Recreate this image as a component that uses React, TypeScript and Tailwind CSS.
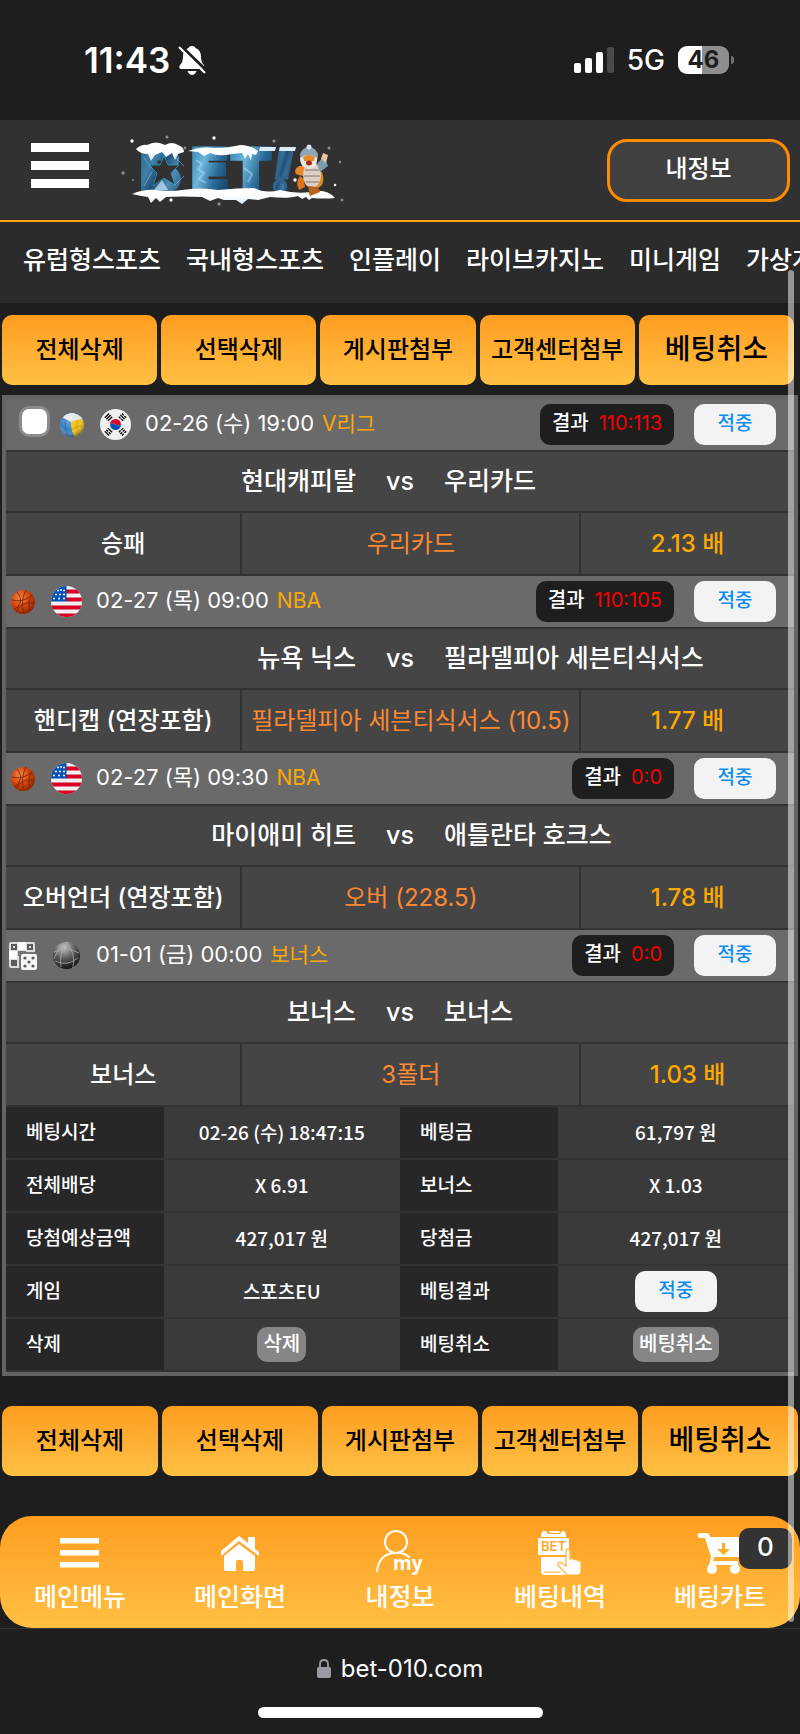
import React from 'react';

const FONT = "font-[Inter,'Noto_Sans_CJK_KR',sans-serif]";
const FONT_KR = "font-['Noto_Sans_CJK_KR',sans-serif]";

type Bet = {
  sport: 'volleyball' | 'basketball' | 'dice';
  flag: 'kr' | 'us' | 'globe';
  date: string;
  league: string;
  score: string;
  home: string;
  away: string;
  type: string;
  pick: string;
  odds: string;
  selectable?: boolean;
};

const menu = ['유럽형스포츠', '국내형스포츠', '인플레이', '라이브카지노', '미니게임', '가상게임'];

const actions = ['전체삭제', '선택삭제', '게시판첨부', '고객센터첨부', '베팅취소'];

const bets: Bet[] = [
  {
    sport: 'volleyball', flag: 'kr', date: '02-26 (수) 19:00', league: 'V리그', score: '110:113',
    home: '현대캐피탈', away: '우리카드', type: '승패', pick: '우리카드', odds: '2.13 배', selectable: true,
  },
  {
    sport: 'basketball', flag: 'us', date: '02-27 (목) 09:00', league: 'NBA', score: '110:105',
    home: '뉴욕 닉스', away: '필라델피아 세븐티식서스', type: '핸디캡 (연장포함)',
    pick: '필라델피아 세븐티식서스 (10.5)', odds: '1.77 배',
  },
  {
    sport: 'basketball', flag: 'us', date: '02-27 (목) 09:30', league: 'NBA', score: '0:0',
    home: '마이애미 히트', away: '애틀란타 호크스', type: '오버언더 (연장포함)', pick: '오버 (228.5)', odds: '1.78 배',
  },
  {
    sport: 'dice', flag: 'globe', date: '01-01 (금) 00:00', league: '보너스', score: '0:0',
    home: '보너스', away: '보너스', type: '보너스', pick: '3폴더', odds: '1.03 배',
  },
];

function WinBadge() {
  return (
    <span className={`flex h-[41px] w-[82px] items-center justify-center rounded-[10px] bg-[#f3f3f3] pb-1 text-[19px] font-medium text-[#0a8cf0] ${FONT_KR}`}>
      적중
    </span>
  );
}

/* ---------- Ícones de esporte e bandeiras ---------- */

function SportIcon({ sport }: { sport: Bet['sport'] }) {
  if (sport === 'volleyball') {
    return (
      <svg width="26" height="26" viewBox="0 0 26 26" aria-hidden="true">
        <defs>
          <radialGradient id="vb" cx="40%" cy="30%" r="75%">
            <stop offset="0" stopColor="#fff" stopOpacity=".3" />
            <stop offset=".55" stopColor="#fff" stopOpacity="0" />
            <stop offset="1" stopColor="#000" stopOpacity=".55" />
          </radialGradient>
          <clipPath id="vbc"><circle cx="13" cy="13" r="12" /></clipPath>
        </defs>
        <g clipPath="url(#vbc)">
          <rect width="26" height="26" fill="#3d8fd0" />
          <path d="M5 3 L13 0 L24 5 L24 7 L12 10 L4 6Z" fill="#e4e6e8" />
          <path d="M12 10 Q19 6 26 8 V18 L16 26 Q11 18 12 10Z" fill="#f2be10" />
          <path d="M12 10 Q11 18 16 26 H6 L0 8 L4 6Z" fill="#3583c4" />
          <path d="M12 18 Q18 13 26 14 M18 8 Q17 16 20 24" stroke="#c99c0c" strokeWidth=".8" fill="none" />
          <path d="M6 7 Q5 16 9 24" stroke="#2a6296" strokeWidth="1" fill="none" />
        </g>
        <circle cx="13" cy="13" r="12" fill="url(#vb)" />
      </svg>
    );
  }
  if (sport === 'basketball') {
    return (
      <svg width="26" height="26" viewBox="0 0 26 26" aria-hidden="true">
        <defs>
          <radialGradient id="bb" cx="38%" cy="34%" r="70%">
            <stop offset="0" stopColor="#ef8a4c" />
            <stop offset=".5" stopColor="#d94a10" />
            <stop offset="1" stopColor="#8c2400" />
          </radialGradient>
        </defs>
        <circle cx="13" cy="13" r="12" fill="url(#bb)" />
        <g fill="none" stroke="#7d2506" strokeWidth=".9">
          <path d="M2 11 Q13 14 22 6" />
          <path d="M16 1 Q10 12 14 25" />
          <path d="M6 23 Q11 12 24 14" />
          <path d="M7 3 Q12 9 10 14 Q9 19 4 20" />
          <path d="M22 6 Q17 12 20 22" />
        </g>
      </svg>
    );
  }
  return (
    <svg width="28" height="28" viewBox="0 0 28 28" aria-hidden="true">
      <rect x="0" y="0" width="26" height="26" rx="2" fill="#dcdcdc" />
      <rect x="9" y="0" width="8" height="8" fill="#fafafa" />
      <rect x="0" y="9" width="8" height="8" fill="#fafafa" />
      <rect x="9" y="9" width="8" height="5" fill="#757575" />
      <rect x="10" y="10" width="16" height="16" fill="#757575" />
      <g fill="none" stroke="#5c5c5c" strokeWidth="2">
        <rect x="3" y="3" width="4" height="4" />
        <rect x="19" y="3" width="4" height="4" />
      </g>
      <rect x="2" y="18" width="6" height="6" fill="#5c5c5c" />
      <rect x="12" y="12" width="16" height="16" rx="2" fill="#f5f5f5" />
      <g fill="#5c5c5c">
        <circle cx="16" cy="16" r="1.6" />
        <circle cx="24" cy="16" r="1.6" />
        <circle cx="20" cy="20" r="1.6" />
        <circle cx="16" cy="24" r="1.6" />
        <circle cx="24" cy="24" r="1.6" />
      </g>
    </svg>
  );
}

function Flag({ flag }: { flag: Bet['flag'] }) {
  if (flag === 'kr') {
    return (
      <svg width="31" height="31" viewBox="0 0 31 31" aria-hidden="true">
        <circle cx="15.5" cy="15.5" r="15.5" fill="#f0f0f0" />
        <path d="M10 15.5 a5.5 5.5 0 0 1 11 0 q-2.7 2-5.5 0 t-5.5 0Z" fill="#d80027" />
        <path d="M21 15.5 a5.5 5.5 0 0 1 -11 0 q2.7 -2 5.5 0 t5.5 0Z" fill="#0052b4" />
        <g stroke="#111" strokeWidth="1.4">
          <g transform="translate(8.5 8.2) rotate(-45)"><path d="M-3 -2.2 H3 M-3 0 H3 M-3 2.2 H3" /></g>
          <g transform="translate(22.5 8.2) rotate(45)"><path d="M-3 -2.2 H-.5 M.5 -2.2 H3 M-3 0 H3 M-3 2.2 H-.5 M.5 2.2 H3" /></g>
          <g transform="translate(8.5 22.8) rotate(45)"><path d="M-3 -2.2 H3 M-3 0 H-.5 M.5 0 H3 M-3 2.2 H3" /></g>
          <g transform="translate(22.5 22.8) rotate(-45)"><path d="M-3 -2.2 H-.5 M.5 -2.2 H3 M-3 0 H-.5 M.5 0 H3 M-3 2.2 H-.5 M.5 2.2 H3" /></g>
        </g>
      </svg>
    );
  }
  if (flag === 'us') {
    return (
      <svg width="31" height="31" viewBox="0 0 31 31" aria-hidden="true">
        <defs><clipPath id="usc"><circle cx="15.5" cy="15.5" r="15.5" /></clipPath></defs>
        <g clipPath="url(#usc)">
          <rect width="31" height="31" fill="#f0f0f0" />
          <path d="M15 5.5 H31 M15 13.5 H31 M0 21.5 H31 M0 29.5 H31" stroke="#d80027" strokeWidth="4" />
          <rect width="15.5" height="15.5" fill="#0052b4" />
          <g fill="#f0f0f0">
            <circle cx="7" cy="4.5" r="1" /><circle cx="10" cy="4" r="1" /><circle cx="13" cy="4.5" r="1" />
            <circle cx="5" cy="8.5" r="1.1" /><circle cx="9" cy="8.5" r="1.1" /><circle cx="13" cy="8.5" r="1.1" />
            <circle cx="3" cy="12.5" r="1.1" /><circle cx="8" cy="12.5" r="1.1" /><circle cx="13" cy="12.5" r="1.1" />
          </g>
        </g>
      </svg>
    );
  }
  return (
    <svg width="31" height="31" viewBox="0 0 31 31" aria-hidden="true">
      <defs>
        <radialGradient id="gl" cx="40%" cy="20%" r="85%">
          <stop offset="0" stopColor="#c5c5c5" />
          <stop offset=".5" stopColor="#5a5a5a" />
          <stop offset="1" stopColor="#080808" />
        </radialGradient>
      </defs>
      <circle cx="15.5" cy="15.5" r="13.5" fill="url(#gl)" />
      <g fill="none" stroke="#a9a9a9" strokeWidth=".8">
        <path d="M3 19 Q8 5 18 2" />
        <path d="M3 12 Q15 6 28 13" />
        <path d="M15 2 Q25 12 22 28" />
        <path d="M15 2 Q8 14 10 27" />
        <path d="M4 21 Q16 27 27 18" />
      </g>
    </svg>
  );
}

/* ---------- Logo ---------- */

function Logo() {
  return (
    <svg width="226" height="72" viewBox="0 0 226 72" role="img" aria-label="BET!">
      <defs>
        <linearGradient id="ice" x1="0" y1="0" x2="1" y2="1">
          <stop offset="0" stopColor="#2d678f" />
          <stop offset=".35" stopColor="#3f7fa9" />
          <stop offset=".5" stopColor="#234f78" />
          <stop offset=".7" stopColor="#4d8db8" />
          <stop offset="1" stopColor="#1b456d" />
        </linearGradient>
        <linearGradient id="ice2" x1="0" y1="0" x2="1" y2=".6">
          <stop offset="0" stopColor="#2a7ca4" />
          <stop offset=".4" stopColor="#6db7dc" />
          <stop offset=".75" stopColor="#2a6b98" />
          <stop offset="1" stopColor="#1a4a76" />
        </linearGradient>
        <linearGradient id="snow" x1="0" y1="0" x2="0" y2="1">
          <stop offset="0" stopColor="#fff" />
          <stop offset=".6" stopColor="#fafdff" />
          <stop offset="1" stopColor="#cfe5f5" />
        </linearGradient>
      </defs>
      <g className="font-[Inter,sans-serif] font-black" fontSize="58" strokeWidth="5">
        <text x="21" y="57" fill="url(#ice)" stroke="url(#ice)">B</text>
        <text x="72" y="57" fill="url(#ice2)" stroke="url(#ice2)">E</text>
        <text x="111" y="57" fill="url(#ice2)" stroke="url(#ice2)">T</text>
        <text x="151" y="57" fill="url(#ice)" stroke="#2f648e" strokeWidth="3" fontStyle="italic">!</text>
      </g>
      <path d="M44 22 l4 9 11 0 -8 8 4 12 -11-7 -11 8 4-13 -8-8 11 0Z" fill="#313131" stroke="#22a0b5" strokeWidth=".8" />
      <path d="M34 56 l8-10 6 10Z" fill="#b9d8ee" opacity=".8" />
      <path d="M24 52 l8-14 M56 24 l8 8 M54 52 l10-10 M24 24 l8 10" stroke="#8fb8d8" strokeWidth="1" opacity=".6" />
      <path d="M76 26 l6 4 -4 5 6 4 -5 6 7 4 M124 34 l8 6 -4 8" stroke="#b9e0f5" strokeWidth="2" fill="none" opacity=".5" />
      {/* neve no topo */}
      <path
        d="M16 15 Q22 10 27 11 Q36 6 45 11 Q52 7 58 11 Q64 13 64 18 L58 20 L55 26 L52 19 L46 23 L42 18 L35 21 L31 27 L28 20 Q20 20 16 15Z"
        fill="url(#snow)"
      />
      <path
        d="M68 17 Q80 12 92 14 Q110 14 120 11 Q130 11 138 17 L136 21 L132 20 L131 27 L128 20 L125 25 L122 19 L112 20 Q98 23 90 19 L84 22 L78 18Z"
        fill="url(#snow)"
      />
      <path d="M140 13 H156 L155 17 H139Z M160 13 H176 L175 17 H159Z" fill="#dcecf7" />
      {/* neve na base */}
      <path
        d="M12 60 Q24 55 36 56 Q50 58 62 56 Q80 53 98 56 Q118 54 134 54 Q146 60 160 56 Q176 60 190 58 Q206 54 215 64 Q204 65 192 64 L189 66 L186 63 L182 65 L178 62 Q168 65 150 63 L138 66 L128 65 L122 70 L116 66 L104 66 L98 64 L90 67 L82 63 Q60 62 46 63 L40 68 L36 64 L31 69 L28 63 Q20 62 12 60Z"
        fill="url(#snow)"
      />
      {/* mascote */}
      <path d="M198 54 Q206 50 202 38 L196 36 L194 52Z" fill="#e08a1c" />
      <path d="M179 32 q-6 4-3 8 q8 4 14-1 l-2-7Z" fill="#e8862a" />
      <path d="M180 42 q-5 6-1 14 l6-3 -1-8Z" fill="#dd7418" />
      <ellipse cx="192" cy="41" rx="9" ry="13" fill="#d9cfc6" />
      <path d="M185 36 h14 M184 42 h16 M186 48 h13" stroke="#8a7568" strokeWidth="1" />
      <path d="M188 52 q12 0 12 6 l-10 4 q-2-3-1-5Z" fill="#b8631c" />
      <path d="M197 30 L204 22 L208 32 L200 38Z" fill="#7e9bab" />
      <path d="M201 25 l2-6 5 2 -2 8Z" fill="#e9c3a0" />
      <circle cx="189" cy="22" r="9" fill="#8fa6b5" />
      <path d="M180 24 q0 10 9 11 q9-1 8-11 q-8-6-17 0Z" fill="#eee7df" />
      <path d="M183 23 q6-4 12 0 l-1 4 h-10Z" fill="#e58a2c" />
      <ellipse cx="189" cy="29" rx="3" ry="2.5" fill="#a62a1c" />
      <circle cx="189" cy="13" r="2.5" fill="#d5e2ea" />
      {/* flocos */}
      <g fill="#fff">
        <circle cx="12" cy="7" r="1.7" /><circle cx="94" cy="4" r="1.7" /><circle cx="51" cy="66" r="1.7" />
        <circle cx="175" cy="46" r="1.7" /><circle cx="215" cy="51" r="1.3" /><circle cx="138" cy="64" r="1.5" />
      </g>
      <g fill="#8d8d8d">
        <circle cx="47" cy="3" r="1.5" /><circle cx="3" cy="39" r="1.7" /><circle cx="13" cy="46" r="1" />
        <circle cx="154" cy="7" r="1.6" /><circle cx="209" cy="14" r="1.5" /><circle cx="220" cy="28" r="1.2" />
        <circle cx="222" cy="66" r="1.3" /><circle cx="99" cy="70" r="1.7" /><circle cx="65" cy="14" r="1.4" />
      </g>
    </svg>
  );
}

/* ---------- Ícones da barra inferior ---------- */

function MenuIcon() {
  return (
    <svg width="40" height="46" viewBox="0 0 40 46" fill="#fff" aria-hidden="true">
      <path d="M0 8 H39 V13.500 H0Z M0 20 H39 V25.500 H0Z M0 32 H39 V37.500 H0Z" />
    </svg>
  );
}

function HomeIcon() {
  return (
    <svg width="38" height="46" viewBox="0 -6 38 46" fill="#fff" aria-hidden="true">
      <path d="M0 15 L18 0 L27 7 V1 H34 V13 L38 16 V20 L18 5 L0 20Z" />
      <path d="M3 20 L18 8 L34 20 V33 q0 2-2 2 H22 V26 q0-2-2-2 h-3 q-2 0-2 2 V35 H5 q-2 0-2-2Z" />
    </svg>
  );
}

function MyIcon() {
  return (
    <svg width="48" height="46" viewBox="0 0 48 46" aria-hidden="true">
      <g fill="none" stroke="#fff" strokeWidth="2" strokeLinecap="round">
        <circle cx="20" cy="12" r="11" />
        <path d="M1 41 Q3 25 17 23 M24 23 Q30 24 33 27" />
      </g>
      <text x="17" y="40" fontSize="19" fill="#fff" className="font-['Open_Sans',sans-serif] font-bold">my</text>
    </svg>
  );
}

function BetIcon() {
  return (
    <svg width="44" height="46" viewBox="0 0 44 46" aria-hidden="true">
      <path d="M5 1 H8 L10 4 H22 L24 1 H26 Q28 2 28 7 H3 Q3 2 5 1Z M11 1 H22 L21 3 H12Z" fill="#fff" />
      <rect x="0" y="8" width="31" height="17" rx="1" fill="#fff" />
      <text x="15.5" y="21" textAnchor="middle" fontSize="13" fill="#ffa92b" className="font-[Inter,sans-serif] font-semibold">BET</text>
      <path d="M3 27 H28 V45 H7 Q3 45 3 41Z" fill="#fff" />
      <path d="M6 42 H22" stroke="#ffb233" />
      <path
        d="M28 20 q3-2 4 1 v8 q2-2 4 1 q2-2 4 1 q3-1 3 2 v9 q0 3-3 3 H29 L20 35 q0-4 4-2 l4 3Z"
        fill="#fff"
        stroke="#ffb233"
        strokeWidth="1.2"
      />
    </svg>
  );
}

function CartIcon() {
  return (
    <svg width="46" height="46" viewBox="0 0 46 46" aria-hidden="true">
      <path d="M2 3 H10 Q12 3 13 7 H46 L42 27 H17 L16 31 H41 V35 H12 L14 27 L8 8 H2 Q-1 5 2 3Z" fill="#fff" />
      <circle cx="15" cy="39" r="5" fill="#fff" />
      <circle cx="38" cy="39" r="5" fill="#fff" />
      <path d="M25 13 h3 v6 h5 l-6.500 6 -6.500-6 h5Z" fill="#ffa92b" />
    </svg>
  );
}

const tabs = [
  { label: '메인메뉴', icon: <MenuIcon /> },
  { label: '메인화면', icon: <HomeIcon /> },
  { label: '내정보', icon: <MyIcon /> },
  { label: '베팅내역', icon: <BetIcon /> },
  { label: '베팅카트', icon: <CartIcon />, count: 0 },
];

/* ---------- Blocos da página ---------- */

function StatusBar() {
  return (
    <div className="flex h-[120px] items-center justify-between pr-[66px] pl-[84px] font-[Inter,sans-serif] text-white">
      <div className="flex items-center gap-2">
        <span className="text-[35px] font-semibold">11:43</span>
        <svg width="28" height="30" viewBox="0 0 28 30" aria-hidden="true">
          <path d="M14 1 Q17 1 17.500 3 Q23 5 23 12 Q23 17 26 20 Q27 24 24 24 H3 Q0 23 2 20 Q5 17 5 12 Q5 5 10.500 3 Q11 1 14 1Z" fill="#fff" />
          <path d="M9.500 26 H18.500 Q17 30 14 30 Q11 30 9.500 26Z" fill="#fff" />
          <path d="M2 0 L29 26" stroke="#1e1e1e" strokeWidth="3" />
          <path d="M1 2 L27 28" stroke="#fff" strokeWidth="2.200" />
        </svg>
      </div>
      <div className="flex items-center">
        <svg width="40" height="26" viewBox="0 0 40 26" fill="#fff" aria-hidden="true">
          <rect x="0" y="16" width="7" height="10" rx="2" />
          <rect x="11" y="11" width="7" height="15" rx="2" />
          <rect x="22" y="5" width="7" height="21" rx="2" />
          <rect x="33" y="0" width="7" height="26" rx="2" fill="#4a4a4a" />
        </svg>
        <span className="mx-[13px] text-[28px] font-medium">5G</span>
        <span className="flex h-7 w-[51px] items-center justify-center rounded-[9px] bg-linear-to-r from-white from-[47%] to-[#8e8e8e] to-[47%] text-[24px] font-bold text-[#1e1e1e]">
          46
        </span>
        <span className="ml-0.5 h-2 w-[3px] rounded-r-full bg-[#6e6e6e]" />
      </div>
    </div>
  );
}

function ActionButtons({ className }: { className: string }) {
  return (
    <div className={`grid grid-cols-5 gap-1 ${className}`}>
      {actions.map((label) => (
        <button
          key={label}
          type="button"
          className="h-[70px] rounded-[10px] bg-linear-to-b from-[#ff9d1e] to-[#ffc043] text-[24px] font-medium whitespace-nowrap text-black last:pb-0.5 last:text-[28px]"
        >
          {label}
        </button>
      ))}
    </div>
  );
}

function BetRow({ bet }: { bet: Bet }) {
  return (
    <article>
      <div className="flex h-[53px] items-center border-b-2 border-[#333] bg-[#6a6a6a] pr-[18px] pl-[2px]">
        {bet.selectable && (
          <input
            type="checkbox"
            aria-label="베팅 선택"
            className="mr-[7px] mb-[6px] ml-[11px] size-[31px] appearance-none rounded-[10px] border-[3px] border-[#8b8b90] bg-white"
          />
        )}
        <span className="flex w-[30px] justify-center"><SportIcon sport={bet.sport} /></span>
        <span className="ml-[13px] flex"><Flag flag={bet.flag} /></span>
        <span className="ml-3.5 pb-0.5 text-[22px] text-white">{bet.date}</span>
        <span className="ml-2 pb-0.5 text-[21px] text-[#ffa800]">{bet.league}</span>
        <span className="ml-auto flex h-[41px] items-center gap-2.5 rounded-[10px] bg-[#1e1e1e] px-3 pb-1 text-[20px] font-medium text-white">
          결과 <em className="font-normal text-[#f80000] not-italic">{bet.score}</em>
        </span>
        <span className="ml-5"><WinBadge /></span>
      </div>
      <div className="grid h-[61px] grid-cols-[1fr_88px_1fr] items-center border-b-2 border-[#333] bg-[#454545] text-[25px] font-medium text-white">
        <span className="text-right">{bet.home}</span>
        <span className="text-center">vs</span>
        <span>{bet.away}</span>
      </div>
      <div className="grid h-[63px] grid-cols-[30%_43%_27%] border-b-2 border-[#333] bg-[#454545] text-[24px] font-medium whitespace-nowrap">
        <span className="flex items-center justify-center border-r-2 border-[#333] text-white">{bet.type}</span>
        <span className="flex items-center justify-center border-r-2 border-[#333] font-normal text-[#ff8833]">{bet.pick}</span>
        <span className="flex items-center justify-center text-[#ffa800]">{bet.odds}</span>
      </div>
    </article>
  );
}

function SmallButton({ children }: { children: React.ReactNode }) {
  return (
    <button type="button" className="h-[35px] rounded-[10px] bg-[#868686] px-1.5 pb-1 align-middle text-[20px] font-medium text-white">
      {children}
    </button>
  );
}

const summary: [string, React.ReactNode, string, React.ReactNode][] = [
  ['베팅시간', '02-26 (수) 18:47:15', '베팅금', '61,797 원'],
  ['전체배당', 'X 6.91', '보너스', 'X 1.03'],
  ['당첨예상금액', '427,017 원', '당첨금', '427,017 원'],
  ['게임', '스포츠EU', '베팅결과', <span className="flex justify-center"><WinBadge /></span>],
  ['삭제', <SmallButton>삭제</SmallButton>, '베팅취소', <SmallButton>베팅취소</SmallButton>],
];

function Summary() {
  return (
    <table className={`w-full table-fixed border-separate border-spacing-0 text-[19px] font-medium text-white ${FONT_KR}`}>
      <colgroup>
        <col className="w-[20%]" />
        <col className="w-[30%]" />
        <col className="w-[20%]" />
        <col className="w-[30%]" />
      </colgroup>
      <tbody>
        {summary.map(([a, av, b, bv]) => (
          <tr key={a}>
            <th scope="row" className="h-[53px] border-b-2 border-[#333] bg-[#272727] pb-0.5 pl-5 text-left font-medium">{a}</th>
            <td className="h-[53px] border-b-2 border-[#333] bg-[#3a3a3a] text-center">{av}</td>
            <th scope="row" className="h-[53px] border-b-2 border-[#333] bg-[#272727] pb-0.5 pl-5 text-left font-medium">{b}</th>
            <td className="h-[53px] border-b-2 border-[#333] bg-[#3a3a3a] text-center">{bv}</td>
          </tr>
        ))}
      </tbody>
    </table>
  );
}

export default function App() {
  return (
    <div className={`relative min-h-screen overflow-hidden bg-[#1e1e1e] ${FONT}`}>
      <StatusBar />

      {/* Cabeçalho */}
      <header className="flex h-[102px] items-center border-b-2 border-[#ffa500] bg-[#313131] pr-[10px] pl-[31px]">
        <button type="button" aria-label="메뉴">
          <svg width="58" height="54" viewBox="0 0 58 54" fill="#fff" aria-hidden="true">
            <path d="M0 0 H58 V9 H0Z M0 18 H58 V27 H0Z M0 36 H58 V45 H0Z" />
          </svg>
        </button>
        <a href="#" className="ml-[31px]"><Logo /></a>
        <button
          type="button"
          className="ml-auto h-[63px] w-[183px] rounded-[20px] border-[3px] border-[#ff8c00] bg-[#404040] pb-0.5 text-[24px] font-medium text-white"
        >
          내정보
        </button>
      </header>

      <nav className="flex h-[81px] items-center gap-[25px] overflow-hidden bg-[#2b2b2b] pb-1 pl-[23px] text-[25px] font-medium whitespace-nowrap text-white">
        {menu.map((item) => (
          <a key={item} href="#">{item}</a>
        ))}
      </nav>

      <main>
        <ActionButtons className="mt-3 mr-1.5 ml-0.5" />

        <section className="mx-0.5 mt-2.5 border-4 border-[#646464]">
          {bets.map((bet) => (
            <BetRow key={bet.date} bet={bet} />
          ))}
          <Summary />
        </section>

        <ActionButtons className="mx-0.5 mt-[30px]" />
      </main>

      {/* Barra inferior */}
      <nav className="mt-10 grid h-[112px] grid-cols-5 rounded-[32px] bg-linear-to-b from-[#ff9d1e] to-[#ffc043] pt-3.5 text-[25px] font-medium text-white">
        {tabs.map((tab) => (
          <a key={tab.label} href="#" className="relative flex flex-col items-center">
            {tab.icon}
            <span className="leading-[42px]">{tab.label}</span>
            {tab.count !== undefined && (
              <span className="absolute -top-0.5 right-2 flex h-[41px] w-[53px] items-center justify-center rounded-[10px] bg-[#333] pb-1 text-[26px]">
                {tab.count}
              </span>
            )}
          </a>
        ))}
      </nav>

      {/* Barra de endereço do navegador */}
      <footer className="flex h-[106px] flex-col items-center justify-between border-t border-[#333] pt-[24px] pb-4 font-[Inter,sans-serif] text-white">
        <div className="flex items-center gap-2.5">
          <svg width="14" height="20" viewBox="0 0 14 20" aria-hidden="true">
            <rect x="0" y="8" width="14" height="11" rx="2" fill="#9c9aa2" />
            <path d="M3 9 V5 Q3 1 7 1 Q11 1 11 5 V9" fill="none" stroke="#9c9aa2" strokeWidth="1.800" />
          </svg>
          <span className="text-[24px] leading-8">bet-010.com</span>
        </div>
        <span className="h-[11px] w-[285px] rounded-full bg-white" />
      </footer>

      {/* Indicador de rolagem */}
      <div className="absolute top-[270px] right-1.5 bottom-[112px] w-1.5 rounded-full bg-white/50" />
    </div>
  );
}
